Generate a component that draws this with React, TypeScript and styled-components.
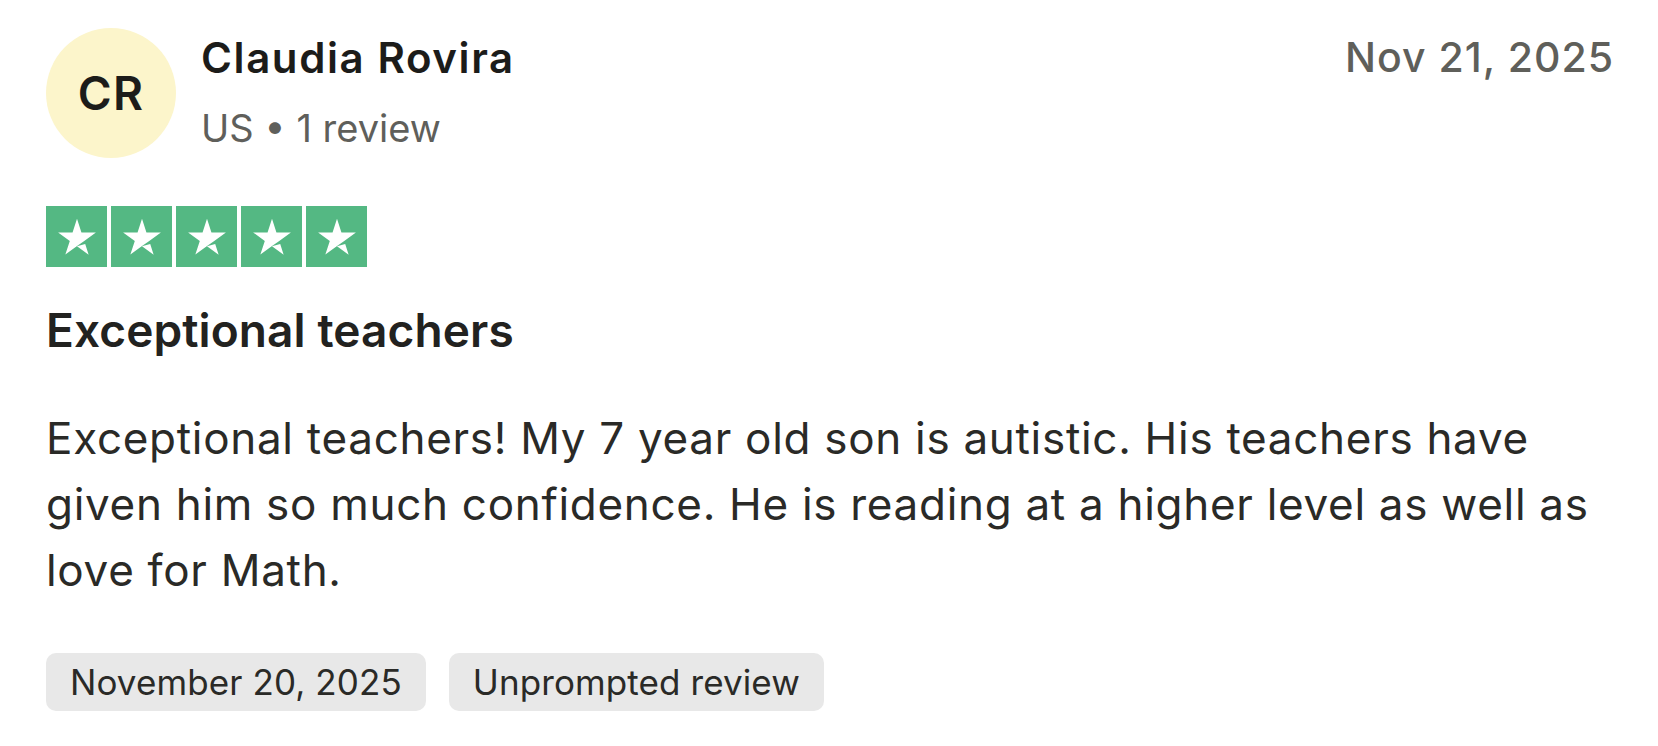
import React from "react";
import styled, { createGlobalStyle } from "styled-components";

const Global = createGlobalStyle`
  html, body { margin: 0; padding: 0; background: #ffffff; }
  body { font-family: Inter, "Noto Sans", sans-serif; -webkit-font-smoothing: antialiased; }
`;

const Card = styled.article`
  width: 1658px;
  height: 746px;
  box-sizing: border-box;
  padding: 28px 44px 0 46px;
  background: #ffffff;
  color: #1e1e1c;
`;

const Header = styled.header`
  display: flex;
  align-items: center;
`;

const Avatar = styled.div`
  width: 130px;
  height: 130px;
  border-radius: 50%;
  background: #fcf5cb;
  display: flex;
  align-items: center;
  justify-content: center;
  font-size: 46px;
  font-weight: 600;
  letter-spacing: 1.3px;
  color: #1c1c1a;
  flex-shrink: 0;
`;

const Info = styled.div`
  display: flex;
  flex-direction: column;
  margin-left: 25px;
  gap: 14px;
`;

const Name = styled.div`
  font-size: 42px;
  line-height: 56px;
  font-weight: 600;
  letter-spacing: 1.6px;
  color: #1c1c1a;
`;

const Meta = styled.div`
  font-size: 38px;
  line-height: 56px;
  font-weight: 400;
  letter-spacing: 0;
  color: #5f5f5b;
`;

const DateText = styled.time`
  align-self: flex-start;
  margin-left: auto;
  margin-top: 5px;
  font-size: 41px;
  line-height: 48px;
  font-weight: 500;
  letter-spacing: 1px;
  color: #5f5f5a;
`;

const Stars = styled.div`
  display: flex;
  gap: 4px;
  margin-top: 48px;
`;

const StarBox = styled.div`
  width: 61px;
  height: 61px;
  background: #54b883;
  display: flex;
  align-items: center;
  justify-content: center;
`;

const Title = styled.h2`
  margin: 35px 0 0;
  font-size: 46px;
  line-height: 56px;
  font-weight: 600;
  letter-spacing: 0.1px;
  color: #222220;
`;

const Body = styled.p`
  margin: 47px 0 0;
  font-size: 44px;
  line-height: 66px;
  font-weight: 400;
  letter-spacing: 0.7px;
  color: #2a2a27;
  max-width: 1566px;
`;

const Tags = styled.div`
  display: flex;
  gap: 23px;
  margin-top: 50px;
`;

const Tag = styled.span`
  height: 58px;
  line-height: 58px;
  padding: 0 24px;
  border-radius: 10px;
  background: #e8e8e8;
  font-size: 35px;
  font-weight: 400;
  letter-spacing: 0.1px;
  color: #2a2a27;
`;

const Star = () => (
  <svg width="54" height="54" viewBox="0 0 24 24" aria-hidden="true">
    <path
      fill="#ffffff"
      d="M12 16.0625L15.65 15.1375L17.175 19.8375L12 16.0625ZM20.4 9.9875H13.975L12 3.9375L10.025 9.9875H3.6L8.8 13.7375L6.825 19.7875L12.025 16.0375L15.225 13.7375L20.4 9.9875Z"
    />
  </svg>
);

export default function App() {
  return (
    <>
      <Global />
      <Card>
        <Header>
          <Avatar>CR</Avatar>
          <Info>
            <Name>Claudia Rovira</Name>
            <Meta>US • 1 review</Meta>
          </Info>
          <DateText>Nov 21, 2025</DateText>
        </Header>
        <Stars>
          {[0, 1, 2, 3, 4].map((i) => (
            <StarBox key={i}>
              <Star />
            </StarBox>
          ))}
        </Stars>
        <Title>Exceptional teachers</Title>
        <Body>
          Exceptional teachers! My 7 year old son is autistic. His teachers have
          given him so much confidence. He is reading at a higher level as well
          as love for Math.
        </Body>
        <Tags>
          <Tag>November 20, 2025</Tag>
          <Tag>Unprompted review</Tag>
        </Tags>
      </Card>
    </>
  );
}
